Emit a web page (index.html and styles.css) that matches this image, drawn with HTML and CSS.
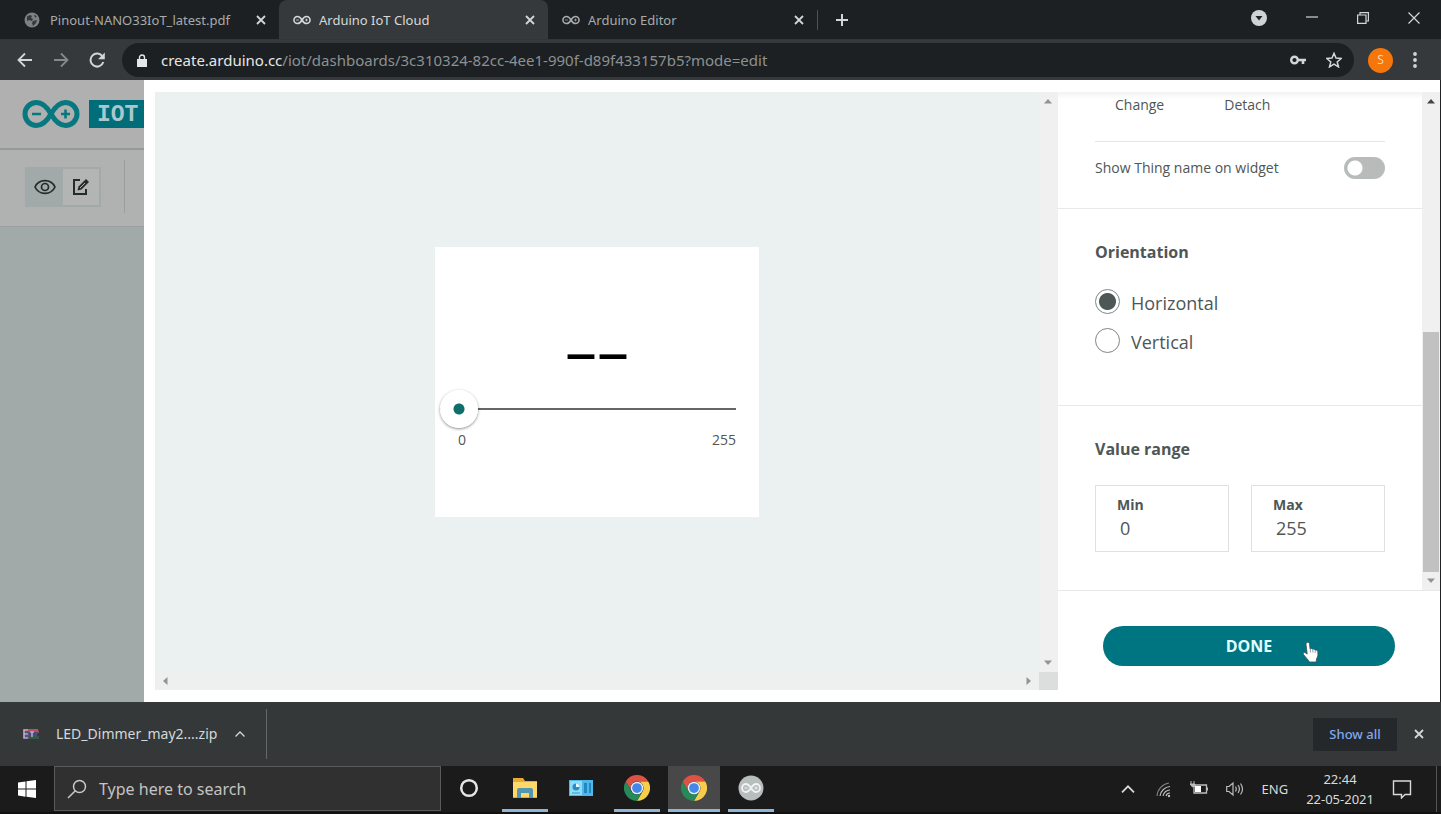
FILE: index.html
```html
<!DOCTYPE html>
<html lang="en">
<head>
<meta charset="utf-8">
<title>Arduino IoT Cloud</title>
<link rel="stylesheet" href="styles.css">
</head>
<body>
<svg class="defs" aria-hidden="true">
  <symbol id="x" viewBox="0 0 12 12"><path d="M2 2l8 8M10 2l-8 8" fill="none" stroke="currentColor" stroke-width="1.8"/></symbol>
  <symbol id="infinity" viewBox="0 0 58 28"><path d="M29 14C25 7 20.500 2.500 14.500 2.500a11.500 11.500 0 0 0 0 23C20.500 25.500 25 21 29 14S37.500 2.500 43.500 2.500a11.500 11.500 0 0 1 0 23C37.500 25.500 33 21 29 14z" fill="none" stroke="currentColor" stroke-width="5"/><path d="M10 14h9M39 14h9M43.500 9.500v9" fill="none" stroke="currentColor" stroke-width="2.600"/></symbol>
  <symbol id="up" viewBox="0 0 8 6"><path d="M0 5.500L4 1l4 4.500z" fill="currentColor"/></symbol>
  <symbol id="chrome" viewBox="0 0 24 24"><path d="M1.600 6A12 12 0 0 1 22.400 6H12A6 6 0 0 0 6.800 15z" fill="#de5246"/><path d="M22.400 6A12 12 0 0 1 12 24L17.200 15A6 6 0 0 0 12 6z" fill="#f8cd4c"/><path d="M1.600 6L6.800 15A6 6 0 0 0 17.200 15L12 24A12 12 0 0 1 1.600 6z" fill="#26895a"/><circle cx="12" cy="12" r="5.800" fill="#e8eef4"/><circle cx="12" cy="12" r="4.500" fill="#4587e8"/></symbol>
  <symbol id="caret" viewBox="0 0 12 8"><path d="M1.500 6.500L6 2l4.500 4.500" fill="none" stroke="currentColor" stroke-width="1.300"/></symbol>
</svg>
<div class="screen">
  <header class="tabstrip">
    <div class="tab">
      <svg class="icon16" viewBox="0 0 16 16"><circle cx="8" cy="8" r="7.500" fill="#7d8183"/><path d="M3 4.500L6 3l2 1-1 2 2 1-1 2-3-1-2 1zM9 9l4-1-1 3-3 3-1-3zM10 2.500l3 2-2 1z" fill="#34383a"/></svg>
      <span class="tab-title">Pinout-NANO33IoT_latest.pdf</span>
      <button class="plain" aria-label="Close tab"><svg class="icon12"><use href="#x"/></svg></button>
    </div>
    <div class="tab active">
      <svg class="icon-inf"><use href="#infinity"/></svg>
      <span class="tab-title">Arduino IoT Cloud</span>
      <button class="plain" aria-label="Close tab"><svg class="icon12"><use href="#x"/></svg></button>
    </div>
    <div class="tab">
      <svg class="icon-inf"><use href="#infinity"/></svg>
      <span class="tab-title">Arduino Editor</span>
      <button class="plain" aria-label="Close tab"><svg class="icon12"><use href="#x"/></svg></button>
    </div>
    <button class="plain new-tab" aria-label="New tab"><svg class="icon16" viewBox="0 0 16 16"><path d="M8 2v12M2 8h12" stroke="currentColor" stroke-width="2"/></svg></button>
    <div class="window-controls">
      <button class="plain" aria-label="Search tabs"><svg class="icon16" viewBox="0 0 16 16"><circle cx="8" cy="8" r="8" fill="#d0d3d3"/><path d="M4.500 6h7L8 10.500z" fill="#202425"/></svg></button>
      <button class="plain" aria-label="Minimize"><svg class="icon12" viewBox="0 0 12 12"><path d="M0 5h12" stroke="currentColor" stroke-width="1.200"/></svg></button>
      <button class="plain" aria-label="Restore"><svg class="icon12" viewBox="0 0 12 12"><path d="M.6 3h8.400v8.400H.6zM3 3V.6h8.400V9H9" fill="none" stroke="currentColor" stroke-width="1.200"/></svg></button>
      <button class="plain" aria-label="Close"><svg class="icon12" viewBox="0 0 12 12"><path d="M.5.5l11 11M11.500.5l-11 11" stroke="currentColor" stroke-width="1.200"/></svg></button>
    </div>
  </header>
  <div class="toolbar">
    <button class="plain" aria-label="Back"><svg class="icon16" viewBox="0 0 16 16"><path d="M15 8H2M8 1.500L1.500 8 8 14.500" fill="none" stroke="currentColor" stroke-width="1.800"/></svg></button>
    <button class="plain faded" aria-label="Forward"><svg class="icon16" viewBox="0 0 16 16"><path d="M1 8h13M8 1.500L14.500 8 8 14.500" fill="none" stroke="currentColor" stroke-width="1.800"/></svg></button>
    <button class="plain" aria-label="Reload"><svg class="icon16" viewBox="0 0 16 16"><path d="M13.500 4.500A6.500 6.500 0 1 0 14.300 10" fill="none" stroke="currentColor" stroke-width="2"/><path d="M15.800.5v6.800H9z" fill="currentColor"/></svg></button>
    <div class="omnibox">
      <svg class="lock" viewBox="0 0 10 13"><path d="M0 5h10v8H0z" fill="currentColor"/><path d="M2.500 6V3.500a2.500 2.500 0 0 1 5 0V6" fill="none" stroke="currentColor" stroke-width="1.400"/></svg>
      <p class="url"><span class="host">create.arduino.cc</span>/iot/dashboards/3c310324-82cc-4ee1-990f-d89f433157b5?mode=edit</p>
      <button class="plain" aria-label="Passwords"><svg class="icon16" viewBox="0 0 16 16"><circle cx="4.500" cy="8" r="3.300" fill="none" stroke="currentColor" stroke-width="2.400"/><path d="M8 8h8M13 8v4" stroke="currentColor" stroke-width="2.600"/></svg></button>
      <button class="plain" aria-label="Bookmark"><svg class="icon16" viewBox="0 0 16 16"><path d="M8 1.300l2 4.800 5.200.4-4 3.400 1.300 5L8 12.200l-4.500 2.700 1.300-5-4-3.400L6 6.100z" fill="none" stroke="currentColor" stroke-width="1.500"/></svg></button>
    </div>
    <button class="avatar">S</button>
    <button class="plain" aria-label="Menu"><svg class="dots" viewBox="0 0 4 16"><circle cx="2" cy="2" r="1.900" fill="currentColor"/><circle cx="2" cy="8" r="1.900" fill="currentColor"/><circle cx="2" cy="14" r="1.900" fill="currentColor"/></svg></button>
  </div>

  <main class="page">
    <div class="backdrop">
      <div class="brand">
        <svg class="logo"><use href="#infinity"/></svg>
        <span class="brand-tag">IOT</span>
      </div>
      <div class="mode-bar">
        <div class="mode-group">
          <button class="mode" aria-label="View"><svg class="eye" viewBox="0 0 22 16"><path d="M1 8C5-.5 17-.5 21 8 17 16.500 5 16.500 1 8z" fill="none" stroke="currentColor" stroke-width="1.700"/><circle cx="11" cy="8" r="3.500" fill="none" stroke="currentColor" stroke-width="1.700"/></svg></button>
          <button class="mode selected" aria-label="Edit"><svg class="pencil" viewBox="0 0 18 18"><path d="M8 2H2v14h12v-5" fill="none" stroke="currentColor" stroke-width="2"/><path d="M5.500 12.500l1-4L14 1l3 3-7.500 7.500z" fill="currentColor"/><path d="M8 10l5-5" stroke="#b3b5b5"/></svg></button>
        </div>
      </div>
    </div>

    <section class="dialog">
      <div class="preview">
        <div class="canvas">
          <div class="widget">
            <output class="reading" for="level">––</output>
            <input class="slider" id="level" type="range" min="0" max="255" value="0" aria-label="Value">
            <div class="limits"><span>0</span><span>255</span></div>
          </div>
        </div>
        <div class="bar vertical"><svg class="arrow"><use href="#up"/></svg><svg class="arrow down"><use href="#up"/></svg></div>
        <div class="bar horizontal"><svg class="arrow left"><use href="#up"/></svg><svg class="arrow right"><use href="#up"/></svg></div>
        <div class="corner"></div>
      </div>

      <form class="settings">
        <div class="scroller">
          <div class="sections">
            <div class="group linked">
              <div class="actions"><button class="text-button" type="button">Change</button><button class="text-button" type="button">Detach</button></div>
              <div class="switch-row"><label for="thing">Show Thing name on widget</label><input class="switch" id="thing" type="checkbox"></div>
            </div>
            <div class="group orientation">
              <h2>Orientation</h2>
              <div class="choices">
                <label class="choice"><input type="radio" name="orientation" checked><span>Horizontal</span></label>
                <label class="choice"><input type="radio" name="orientation"><span>Vertical</span></label>
              </div>
            </div>
            <div class="group range">
              <h2>Value range</h2>
              <div class="fields">
                <div class="field"><label for="min">Min</label><input id="min" type="text" value="0"></div>
                <div class="field"><label for="max">Max</label><input id="max" type="text" value="255"></div>
              </div>
            </div>
          </div>
          <div class="bar vertical"><svg class="arrow dark"><use href="#up"/></svg><div class="thumb"></div><svg class="arrow down"><use href="#up"/></svg></div>
        </div>
        <div class="footer">
          <button class="done" type="button">DONE<svg class="pointer" viewBox="0 0 18 22"><path d="M5 1.500c1.200-.6 2.300 0 2.500 1.500l.6 5c1-.8 2-.5 2.500.3 1-.5 2-.2 2.400.8 1.500-.6 2.700.2 2.800 1.700.2 3 .2 5-1.300 7l-.3 3.200H7.500C5.500 18 3 15.500 1.500 13.500c-.8-1.200.5-2.500 1.900-1.700l1.800 1.300L4 3.200c-.1-.8.300-1.400 1-1.700z" fill="#fff" stroke="#3b5053" stroke-width=".8"/><path d="M8.200 8l.4 3.500M10.700 8.500l.3 3M13.200 9.300l.1 2.500" stroke="#64777a" stroke-width=".7"/></svg></button>
        </div>
      </form>
    </section>
  </main>

  <div class="shelf">
    <button class="download">
      <svg class="archive" viewBox="0 0 18 12"><path d="M1 1h15l1 4H2z" fill="#b9525b"/><path d="M7 4h9l-1 4H7z" fill="#454b80"/><path d="M5 8h12v3H3z" fill="#36584a"/><path d="M7 3v8H1V2z" fill="#5f5078"/><path d="M6 2H2v8h4M2 6h4M10 4v5M8 4h4" fill="none" stroke="#d0c8dd" stroke-width="1.200"/></svg>
      <span class="filename">LED_Dimmer_may2....zip</span>
      <svg class="caret"><use href="#caret"/></svg>
    </button>
    <button class="show-all">Show all</button>
    <button class="plain" aria-label="Close downloads"><svg class="icon12"><use href="#x"/></svg></button>
  </div>

  <footer class="taskbar">
    <button class="start" aria-label="Start"><svg class="win" viewBox="0 0 18 18"><path d="M0 2.500L7.500 1.400v7.200H0zM8.500 1.300L18 0v8.600H8.500zM0 9.500h7.500v7.200L0 15.600zM8.500 9.500H18V18l-9.500-1.300z" fill="#fff"/></svg></button>
    <label class="search">
      <svg class="glass" viewBox="0 0 20 20"><circle cx="12.500" cy="7.500" r="6" fill="none" stroke="currentColor" stroke-width="1.500"/><path d="M8.300 11.700L1 19" stroke="currentColor" stroke-width="1.500"/></svg>
      <input type="text" placeholder="Type here to search" aria-label="Type here to search">
    </label>
    <nav class="apps">
      <button class="app" aria-label="Cortana"><svg class="app-icon" viewBox="0 0 26 26"><circle cx="13" cy="13" r="7.800" fill="none" stroke="#e6e6e6" stroke-width="2.500"/></svg></button>
      <button class="app open" aria-label="File Explorer"><svg class="app-icon" viewBox="0 0 26 26"><path d="M1 3h10l2 3h12v17H1z" fill="#e5ab35"/><path d="M1 7h24v15H1z" fill="#ffd869"/><path d="M5 23v-8q0-2 2-2h12q2 0 2 2v8h-4v-5H9v5z" fill="#5297b2"/></svg></button>
      <button class="app" aria-label="Control Panel"><svg class="app-icon" viewBox="0 0 26 26"><path d="M1 5h24v16H1z" fill="#4db8e9"/><path d="M2 6h12v14H2z" fill="#8ddcf8"/><circle cx="8" cy="12" r="3.500" fill="#2c8bc5"/><path d="M8 12V8.500a3.500 3.500 0 0 1 3.500 3.500z" fill="#e8faff"/><path d="M16 8h3v10h-3zM21 8h2v10h-2z" fill="#2387c2"/><path d="M4 18h8" stroke="#3299ce"/></svg></button>
      <button class="app open" aria-label="Chrome"><svg class="app-icon"><use href="#chrome"/></svg></button>
      <button class="app open current" aria-label="Chrome window"><svg class="app-icon"><use href="#chrome"/></svg></button>
      <button class="app open" aria-label="Arduino"><svg class="app-icon" viewBox="0 0 26 26"><circle cx="13" cy="13" r="12.500" fill="#b8bebd"/><path d="M13 13c-2-3-3.500-4-5-4a4 4 0 0 0 0 8c1.500 0 3-1 5-4s3.500-4 5-4a4 4 0 0 1 0 8c-1.500 0-3-1-5-4z" fill="none" stroke="#f0f3f2" stroke-width="1.800"/><path d="M6.500 13h3M16.500 13h3M18 11.500v3" stroke="#f0f3f2"/></svg></button>
    </nav>
    <div class="tray">
      <svg class="tray-caret"><use href="#caret"/></svg>
      <svg class="tray-icon" viewBox="0 0 18 18"><g fill="none" stroke="currentColor" stroke-width="1.200"><path d="M3 16A14 14 0 0 1 15 3" opacity=".6"/><path d="M6 16A11 11 0 0 1 16 6.500"/><path d="M9 16a7 7 0 0 1 7-6M12 16a4 4 0 0 1 4-3"/></g><circle cx="15" cy="16" r="1.200" fill="currentColor"/></svg>
      <svg class="tray-icon" viewBox="0 0 18 18"><path d="M4 5h12.500v8H4z" fill="none" stroke="currentColor" stroke-width="1.300"/><path d="M5 6h6v6H5z" fill="#fff"/><path d="M16.500 7.500H18v3h-1.500z" fill="currentColor"/><path d="M1 1v3M4 1v3M0 4h5v2L2.500 7z" fill="currentColor" stroke="currentColor"/></svg>
      <svg class="tray-icon" viewBox="0 0 18 18"><path d="M.7 6.500H3L7 3v12l-4-3.500H.7zM9.500 6.500q1.500 2.500 0 5M12 5q2.800 4 0 8M14.500 3.500q4 5.500 0 11" fill="none" stroke="currentColor" stroke-width="1.200"/></svg>
      <span class="lang">ENG</span>
      <div class="clock"><span>22:44</span><span>22-05-2021</span></div>
      <svg class="notice" viewBox="0 0 20 20"><path d="M1.500 2h17v13.500H13L9.500 19v-3.500h-8z" fill="none" stroke="currentColor" stroke-width="1.400"/></svg>
    </div>
  </footer>
</div>
</body>
</html>
```

FILE: styles.css
```css
* { box-sizing: border-box; }
body {
  margin: 0;
  background: #202324;
  font-family: "Open Sans", "Noto Sans", sans-serif;
  font-size: 14px;
  line-height: 20px;
  color: #4e5656;
}
button, input { font: inherit; color: inherit; margin: 0; }
button { border: 0; padding: 0; background: none; }
svg { display: block; flex: none; }
.defs { position: absolute; width: 0; height: 0; }
.icon12 { width: 12px; height: 12px; }
.icon16 { width: 16px; height: 16px; }
.icon-inf { width: 18px; height: 10px; }
.plain { display: flex; align-items: center; color: #d3d6d6; }
.faded { color: #85898a; }

.screen { min-height: 100vh; display: flex; flex-direction: column; }

/* Browser chrome */
.tabstrip { height: 40px; display: flex; align-items: center; background: #1d2022; border-bottom: 1px solid #323637; font-family: "Noto Sans", sans-serif; font-size: 13px; }
.tab { flex: 0 1 269px; height: 39px; display: flex; align-items: center; gap: 8px; padding: 0 12px 0 14px; color: #a7abac; }
.tab:first-child { flex-basis: 279px; padding-left: 24px; gap: 10px; }
.tab.active { background: #35393b; color: #d6d9da; border-radius: 8px 8px 0 0; }
.tab-title { flex: 1; white-space: nowrap; overflow: hidden; }
.new-tab { height: 20px; padding-left: 16px; border-left: 1px solid #4e5253; }
.window-controls { margin-left: auto; padding: 0 21px 4px 0; display: flex; align-items: center; gap: 39px; }
.toolbar { height: 40px; display: flex; align-items: center; gap: 20px; padding: 0 24px 0 17px; background: #35393b; }
.omnibox { flex: 1; height: 34px; display: flex; align-items: center; gap: 20px; padding: 0 12px 0 15px; margin: 0 -6px 0 -3px; border-radius: 17px; background: #1c2022; }
.lock { width: 10px; height: 13px; color: #e5e6e6; }
.url { flex: 1; margin: 0 0 0 -6px; font-family: "Noto Sans", sans-serif; font-size: 15px; color: #8c9192; white-space: nowrap; overflow: hidden; }
.host { color: #e5e7e7; }
.avatar { width: 25px; height: 25px; border-radius: 50%; background: #f5760b; color: #fbdcbd; font-size: 12px; }
.dots { width: 4px; height: 16px; }

/* Dimmed page under the dialog */
.page { flex: 1; display: flex; margin-right: 1px; }
.backdrop { flex: 0 0 144px; background: #a1a9a9; }
.brand { height: 70px; display: flex; align-items: center; gap: 9px; padding: 0 0 0 22px; background: #b0b0b0; border-bottom: 2px solid #979999; }
.logo { width: 58px; height: 28px; color: #087880; }
.brand-tag { flex: 1; padding: 4px 0 2px 8px; background: #006d79; color: #a9c8cb; font: bold 23px/22px "Liberation Mono", monospace; }
.mode-bar { height: 77px; padding: 10px 19px 13px 25px; background: #b0b1b1; border-bottom: 1px solid #9aa0a0; display: flex; align-items: center; }
.mode-group { display: flex; padding: 2px; background: #a2aaa9; margin-right: 23px; }
.mode-bar::after { content: ""; width: 1px; height: 53px; flex: none; background: #999e9e; }
.mode { width: 36px; height: 36px; display: grid; place-items: center; color: #252a2a; }
.mode.selected { background: #b3b5b5; }
.eye { width: 22px; height: 16px; }
.pencil { width: 18px; height: 18px; }

/* Widget dialog */
.dialog { flex: 1; min-width: 0; display: flex; background: #fff; padding-top: 12px; }
.preview { flex: 1; display: grid; grid-template: 1fr 18px / 1fr 19px; margin: 0 0 12px 11px; background: #ebf0f0; }
.canvas { display: grid; place-items: center; }
.widget { width: 324px; padding: 70px 23px 67px 5px; background: #fff; }
.reading { display: block; margin-bottom: 6px; font-size: 64px; line-height: 66px; text-align: center; color: #000; padding-left: 18px; }
.slider { display: block; width: 100%; height: 40px; appearance: none; background: linear-gradient(#666, #666) center / 100% 2px no-repeat; }
.slider::-webkit-slider-thumb { appearance: none; width: 38px; height: 38px; border-radius: 50%; background: radial-gradient(circle, #0d6e6c 5px, #fff 6px); box-shadow: 0 1px 3px #0007; }
.limits { display: flex; justify-content: space-between; padding-left: 18px; line-height: 21px; }

.bar { background: #f0f0f0; display: flex; justify-content: space-between; align-items: center; color: #929494; }
.vertical { width: 18px; flex: none; flex-direction: column; padding: 6px 0; }
.horizontal { padding: 0 6px; background: #edf0ef; }
.arrow { width: 8px; height: 6px; }
.dark { color: #444; }
.down { transform: rotate(180deg); }
.left { transform: rotate(-90deg); }
.right { transform: rotate(90deg); }
.corner { background: #dcdddd; }

.settings { flex: 0 0 382px; display: flex; flex-direction: column; }
.scroller { display: flex; border-bottom: 1px solid #e7e8e8; }
.sections { flex: 1; }
.thumb { width: 16px; height: 240px; margin-top: auto; margin-bottom: 6px; background: #c1c1c1; }
.group { padding: 33px 37px 0; border-bottom: 1px solid #e7e8e8; }
.group h2 { margin: 0; font-size: 16px; line-height: 20px; font-weight: 700; }
.linked { padding-top: 3px; background: linear-gradient(#f1f2f2, #fff 7px); }
.actions { display: flex; gap: 60px; padding: 0 20px 26px; border-bottom: 1px solid #e5e6e6; }
.switch-row { display: flex; align-items: center; justify-content: space-between; padding: 15px 0 29px; }
.switch { appearance: none; width: 41px; height: 22px; border-radius: 11px; background: radial-gradient(circle at 11px 11px, #fff 7px, #b7bbba 8px); }
.orientation { padding-bottom: 52px; }
.choices { display: grid; gap: 14px; margin-top: 27px; }
.choice { display: flex; gap: 11px; height: 25px; font-size: 18px; line-height: 28px; }
.choice input { appearance: none; width: 25px; height: 25px; border: 1px solid #7f8585; border-radius: 50%; }
.choice input:checked { background: radial-gradient(circle, #4e5656 8px, #fff 9px); }
.range { padding-bottom: 38px; border-bottom: 0; }
.fields { display: flex; gap: 22px; margin-top: 26px; }
.field { flex: 1; min-width: 0; height: 67px; padding: 9px 21px; border: 1px solid #dfe1e1; }
.field label { display: block; font-size: 14px; line-height: 20px; font-weight: 700; }
.field input { display: block; width: 100%; padding: 0 3px; border: 0; background: none; font-size: 18px; line-height: 26px; }
.footer { padding: 35px 45px 36px; }
.done { position: relative; display: block; width: 100%; height: 40px; border-radius: 20px; background: #007582; color: #e0ffff; font-size: 16px; font-weight: 700; }
.pointer { position: absolute; left: 68%; top: 15px; width: 18px; height: 22px; }

/* Downloads shelf */
.shelf { height: 64px; display: flex; align-items: center; padding: 0 16px 0 22px; background: #343839; font-family: "Noto Sans", sans-serif; }
.download { height: 50px; display: flex; align-items: center; padding-right: 20px; border-right: 1px solid #646869; color: #d5d8d9; }
.archive { width: 18px; height: 12px; margin-right: 16px; }
.caret { width: 12px; height: 8px; margin-left: 17px; }
.show-all { width: 84px; height: 33px; margin: 0 16px 0 auto; background: #24282b; color: #81a7ee; font-size: 13px; font-weight: 500; }

/* Taskbar */
.taskbar { height: 48px; display: flex; background: #1b1b1b; color: #dadada; border-bottom: 2px solid #111; font-family: "Noto Sans", sans-serif; }
.start { flex: 0 0 54px; display: grid; place-items: center; }
.win { width: 18px; height: 18px; }
.search { flex: 0 1 387px; display: flex; align-items: center; gap: 12px; margin-bottom: 1px; padding: 0 12px; background: #303030; border: 1px solid #5a5a5a; }
.search input { flex: 1; min-width: 0; border: 0; background: none; font-size: 16px; line-height: 24px; padding: 0; }
.search input::placeholder { color: #c3c3c3; opacity: 1; }
.glass { width: 20px; height: 20px; color: #c9c9c9; }
.apps { display: flex; gap: 10px; padding-left: 5px; }
.app { width: 46px; display: grid; place-items: center; border-bottom: 3px solid transparent; }
.app.open { border-color: #91b6d5; }
.app.current { width: 52px; margin: 0 -2px; background: #484848; }
.app-icon { width: 26px; height: 26px; }
.tray { margin-left: auto; display: flex; align-items: center; gap: 18px; padding-right: 24px; margin-right: 4px; border-right: 1px solid #555; font-size: 13px; }
.tray-caret { width: 16px; height: 12px; }
.tray-icon { width: 18px; height: 18px; color: #bdbdbd; }
.clock { display: flex; flex-direction: column; align-items: center; }
.notice { width: 20px; height: 20px; }
```
